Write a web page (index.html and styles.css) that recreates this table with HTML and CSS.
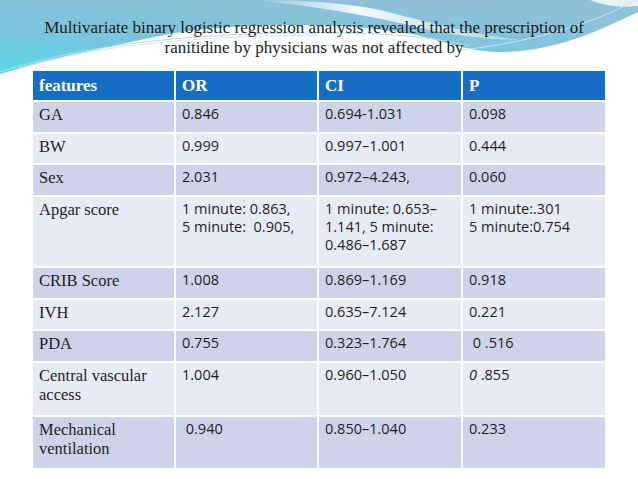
FILE: index.html
```html
<!DOCTYPE html>
<html>
<head>
<meta charset="utf-8">
<link rel="stylesheet" href="styles.css">
</head>
<body>
<div class="slide">
  <svg class="deco" width="638" height="110" viewBox="0 0 638 110" aria-hidden="true">
    <defs>
      <linearGradient id="g1" x1="0" y1="1" x2="0.55" y2="0">
        <stop offset="0" stop-color="#55d8e8"/>
        <stop offset="0.45" stop-color="#79c6dd"/>
        <stop offset="1" stop-color="#8fc1d8"/>
      </linearGradient>
      <linearGradient id="g2" x1="0" y1="0" x2="1" y2="0">
        <stop offset="0" stop-color="#ffffff" stop-opacity="0"/>
        <stop offset="0.4" stop-color="#ffffff" stop-opacity="0.9"/>
        <stop offset="1" stop-color="#ffffff" stop-opacity="0.3"/>
      </linearGradient>
    </defs>
    <path d="M0,0 H638 V12 C600,30 560,50 505,52 C465,53 440,38 400,32 C330,22 230,22 160,36 C100,48 40,62 0,74 Z" fill="url(#g1)"/>
    <path d="M250,0 C320,6 380,18 430,30 C470,38 500,40 520,40 C470,34 420,20 380,10 C340,2 300,0 250,0 Z" fill="url(#g2)"/>
    <path d="M590,0 C605,6 620,8 638,6 V0 Z" fill="#ffffff" opacity="0.8"/>
    <path d="M0,72 C80,46 180,34 300,33 C380,32 430,36 470,46" fill="none" stroke="#b7dce8" stroke-width="1"/>
    <path d="M20,68 C100,44 200,36 320,35" fill="none" stroke="#cfe8f0" stroke-width="1"/>
    <path d="M460,50 C520,44 590,26 636,0" fill="none" stroke="#c8e6ef" stroke-width="1"/>
  </svg>
  <h1 class="title">Multivariate binary logistic regression analysis revealed that the prescription of<br>ranitidine by physicians was not affected by</h1>
  <table class="stats">
    <colgroup>
      <col class="c1"><col class="c2"><col class="c3"><col class="c4">
    </colgroup>
    <thead>
      <tr class="head">
        <th>features</th><th>OR</th><th>CI</th><th>P</th>
      </tr>
    </thead>
    <tbody>
      <tr class="dark r32"><td class="feat">GA</td><td>0.846</td><td>0.694-1.031</td><td>0.098</td></tr>
      <tr class="light r31"><td class="feat">BW</td><td>0.999</td><td>0.997–1.001</td><td>0.444</td></tr>
      <tr class="dark r32"><td class="feat">Sex</td><td>2.031</td><td>0.972–4.243,</td><td>0.060</td></tr>
      <tr class="light r71"><td class="feat">Apgar score</td><td>1 minute: 0.863,<br>5 minute:&nbsp; 0.905,</td><td>1 minute: 0.653–<br>1.141, 5 minute:<br>0.486–1.687</td><td>1 minute:.301<br>5 minute:0.754</td></tr>
      <tr class="dark r32"><td class="feat">CRIB Score</td><td>1.008</td><td>0.869–1.169</td><td>0.918</td></tr>
      <tr class="light r31"><td class="feat">IVH</td><td>2.127</td><td>0.635–7.124</td><td>0.221</td></tr>
      <tr class="dark r32"><td class="feat">PDA</td><td>0.755</td><td>0.323–1.764</td><td>&nbsp;0 .516</td></tr>
      <tr class="light r54"><td class="feat">Central vascular<br>access</td><td>1.004</td><td>0.960–1.050</td><td><i>0</i> .855</td></tr>
      <tr class="dark r53"><td class="feat">Mechanical<br>ventilation</td><td>&nbsp;0.940</td><td>0.850–1.040</td><td>0.233</td></tr>
    </tbody>
  </table>
</div>
</body>
</html>
```
FILE: styles.css
```css
html, body {
  margin: 0;
  padding: 0;
  background: #ffffff;
}
.slide {
  position: relative;
  width: 638px;
  height: 479px;
  overflow: hidden;
  background: #ffffff;
}
.deco {
  position: absolute;
  top: 0;
  left: 0;
  z-index: 0;
}
.title {
  position: relative;
  z-index: 1;
  margin: 0;
  padding: 18px 10px 0 0;
  font-family: "Liberation Serif", "Times New Roman", serif;
  font-weight: normal;
  font-size: 17px;
  line-height: 20px;
  color: #1b1b1b;
  text-align: center;
}
.stats {
  position: relative;
  z-index: 1;
  margin: 11px 0 0 31px;
  width: 576px;
  table-layout: fixed;
  border-collapse: collapse;
}
.c1, .c2 { width: 143px; }
.c3, .c4 { width: 144px; }
.stats th, .stats td {
  border: 2px solid #ffffff;
  padding: 3px 6px 0 6px;
  text-align: left;
  vertical-align: top;
  font-family: "Open Sans", "Lato", "Liberation Sans", sans-serif;
  font-size: 14.5px;
  line-height: 18px;
  color: #1e1e1e;
}
.stats td.feat {
  font-family: "Liberation Serif", "Times New Roman", serif;
  font-size: 16.5px;
  line-height: 19px;
}
.head th {
  height: 29px;
  padding-top: 0;
  vertical-align: middle;
  background: #176dc4;
  color: #ffffff;
  font-family: "Liberation Serif", "Times New Roman", serif;
  font-weight: bold;
  font-size: 17px;
}
.dark td { background: #cdd4ea; }
.light td { background: #e8ebf5; }
.r31 { height: 31px; }
.r32 { height: 32px; }
.r53 { height: 53px; }
.r54 { height: 54px; }
.r71 { height: 71px; }
```
